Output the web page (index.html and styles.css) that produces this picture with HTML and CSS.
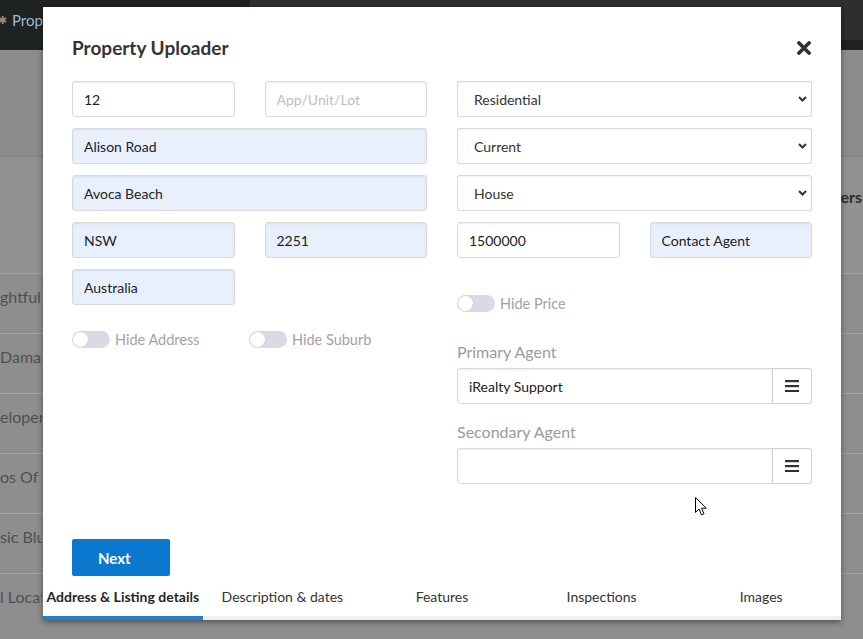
FILE: index.html
```html
<!DOCTYPE html>
<html>
<head>
<meta charset="utf-8">
<title>Property Uploader</title>
<link rel="stylesheet" href="styles.css">
</head>
<body>
<div class="page">
  <header class="nav">
    <div class="brand"><span class="brand-icon">✱</span><span class="brand-text">Properties</span></div>
    <div class="nav-panel"></div>
  </header>
  <section class="hero"></section>
  <div class="table-head"><span class="filters">Filters</span></div>
  <div class="rows">
    <div class="row"><span class="cell">ghtful Apartment</span></div>
    <div class="row"><span class="cell">Damaged Home</span></div>
    <div class="row"><span class="cell">eloper's Dream</span></div>
    <div class="row"><span class="cell">os Of Potential</span></div>
    <div class="row"><span class="cell">sic Blue Cottage</span></div>
    <div class="row"><span class="cell">l Location</span></div>
  </div>
</div>

<div class="modal">
  <div class="modal-header">
    <h1>Property Uploader</h1>
    <button class="close" type="button" aria-label="Close">
      <svg width="14" height="14" viewBox="0 0 14 14"><path d="M2 2L12 12M12 2L2 12" stroke="#333" stroke-width="3.6" stroke-linecap="square"/></svg>
    </button>
  </div>

  <div class="form">
    <div class="col">
      <div class="pair">
        <input class="field" value="12">
        <input class="field" placeholder="App/Unit/Lot">
      </div>
      <input class="field auto" value="Alison Road">
      <input class="field auto" value="Avoca Beach">
      <div class="pair">
        <input class="field auto" value="NSW">
        <input class="field auto" value="2251">
      </div>
      <div class="pair">
        <input class="field auto" value="Australia">
      </div>
      <div class="toggles">
        <label class="toggle"><span class="track"><span class="knob"></span></span>Hide Address</label>
        <label class="toggle"><span class="track"><span class="knob"></span></span>Hide Suburb</label>
      </div>
    </div>

    <div class="col">
      <div class="select"><span>Residential</span><svg width="9" height="6" viewBox="0 0 9 6"><path d="M1 1l3.5 3.5L8 1" fill="none" stroke="#333" stroke-width="2"/></svg></div>
      <div class="select"><span>Current</span><svg width="9" height="6" viewBox="0 0 9 6"><path d="M1 1l3.5 3.5L8 1" fill="none" stroke="#333" stroke-width="2"/></svg></div>
      <div class="select"><span>House</span><svg width="9" height="6" viewBox="0 0 9 6"><path d="M1 1l3.5 3.5L8 1" fill="none" stroke="#333" stroke-width="2"/></svg></div>
      <div class="pair">
        <input class="field" value="1500000">
        <input class="field auto" value="Contact Agent">
      </div>
      <div class="toggles price">
        <label class="toggle"><span class="track"><span class="knob"></span></span>Hide Price</label>
      </div>
      <div class="agent primary">
        <div class="agent-label">Primary Agent</div>
        <div class="group">
          <input class="field" value="iRealty Support">
          <button class="menu" type="button" aria-label="Choose agent">
            <svg width="14" height="12" viewBox="0 0 14 12"><rect y="0" width="14" height="2.2" fill="#333"/><rect y="5" width="14" height="2.2" fill="#333"/><rect y="10" width="14" height="2.2" fill="#333"/></svg>
          </button>
        </div>
      </div>
      <div class="agent secondary">
        <div class="agent-label">Secondary Agent</div>
        <div class="group">
          <input class="field" value="">
          <button class="menu" type="button" aria-label="Choose agent">
            <svg width="14" height="12" viewBox="0 0 14 12"><rect y="0" width="14" height="2.2" fill="#333"/><rect y="5" width="14" height="2.2" fill="#333"/><rect y="10" width="14" height="2.2" fill="#333"/></svg>
          </button>
        </div>
      </div>
    </div>
  </div>

  <div class="footer">
    <button class="next" type="button">Next</button>
  </div>

  <nav class="tabs">
    <div class="tab active">Address &amp; Listing details</div>
    <div class="tab">Description &amp; dates</div>
    <div class="tab">Features</div>
    <div class="tab">Inspections</div>
    <div class="tab">Images</div>
  </nav>
</div>

<svg class="cursor" width="12" height="19" viewBox="0 0 12 19"><path d="M0.5 0.5L0.5 15.5L4 12L6.5 17.8L9 16.7L6.6 11.2L11.2 11.2Z" fill="#fff" stroke="#000" stroke-width="1" stroke-linejoin="round"/></svg>
</body>
</html>
```

FILE: styles.css
```css
* { box-sizing: border-box; }

html, body {
  margin: 0;
  padding: 0;
}

body {
  width: 863px;
  height: 639px;
  overflow: hidden;
  position: relative;
  background: #8e8e8e;
  font-family: "Lato", "Liberation Sans", sans-serif;
}

/* ---------- background page ---------- */
.page {
  width: 863px;
  height: 639px;
  overflow: hidden;
}

.nav {
  display: flex;
  height: 50px;
  background: #1e2222;
}

.brand {
  width: 250px;
  height: 40px;
  display: flex;
  align-items: center;
  gap: 5px;
  color: #9bbbd6;
  font-size: 15px;
}

.brand-icon {
  margin-left: -2px;
  color: #a08a74;
  font-size: 11px;
}

.nav-panel {
  flex: 1;
  height: 40px;
  background: #2e2e2e;
  border-bottom-left-radius: 4px;
}

.hero {
  height: 105px;
  background: #8d8d8d;
}

.table-head {
  height: 118px;
  display: flex;
  justify-content: flex-end;
  align-items: flex-start;
  padding-top: 30px;
  background: #919191;
  border-top: 2px solid #868686;
}

.filters {
  margin-right: 1px;
  font-size: 16px;
  font-weight: 700;
  color: #2e2e2e;
}

.row {
  height: 60px;
  border-top: 1px solid #a2a2a2;
  padding-top: 13px;
  font-size: 16px;
  color: #505050;
  white-space: nowrap;
}

.cell {
  display: block;
  width: 42px;
  overflow: hidden;
}

/* ---------- modal ---------- */
.modal {
  position: absolute;
  left: 43px;
  top: 7px;
  width: 798px;
  height: 613px;
  background: #fff;
  display: flex;
  flex-direction: column;
  box-shadow: 0 2px 6px rgba(0, 0, 0, 0.45);
}

.modal-header {
  display: flex;
  justify-content: space-between;
  align-items: center;
  height: 74px;
  padding: 29px 30px 21px 29px;
}

.modal-header h1 {
  margin: 0;
  font-size: 19px;
  line-height: 24px;
  font-weight: 700;
  color: #333;
}

.close {
  width: 14px;
  height: 14px;
  padding: 0;
  border: 0;
  background: none;
  display: flex;
}

.form {
  flex: 1;
  display: grid;
  grid-template-columns: 355px 355px;
  column-gap: 30px;
  align-items: start;
  padding: 0 29px;
}

.col {
  display: flex;
  flex-direction: column;
  gap: 11px;
}

.pair {
  display: grid;
  grid-template-columns: 1fr 1fr;
  gap: 30px;
}

.field {
  display: block;
  width: 100%;
  height: 36px;
  margin: 0;
  padding: 0 11px;
  border: 1px solid #dadada;
  border-radius: 3px;
  background: #fff;
  box-shadow: inset 0 1px 2px rgba(0, 0, 0, 0.08);
  font-family: inherit;
  font-size: 14px;
  color: #222;
  outline: none;
}

.field.auto {
  background: #e8f0fe;
}

.field::placeholder {
  color: #bdbdbd;
}

.select {
  height: 36px;
  display: flex;
  align-items: center;
  justify-content: space-between;
  padding: 0 4px 0 16px;
  border: 1px solid #dadada;
  border-radius: 2px;
  background: #fff;
  box-shadow: inset 0 1px 2px rgba(0, 0, 0, 0.06);
  font-size: 14px;
  color: #333;
}

.toggles {
  display: grid;
  grid-template-columns: 177px auto;
  height: 17px;
  margin-top: 15px;
}

.toggles.price {
  margin-top: 26px;
}

.toggle {
  display: flex;
  align-items: center;
  gap: 5px;
  height: 17px;
  font-size: 14.5px;
  color: #a2a2a2;
  white-space: nowrap;
}

.track {
  width: 38px;
  height: 17px;
  border-radius: 9px;
  background: #dcd8e6;
  padding: 1px;
  display: flex;
}

.knob {
  width: 15px;
  height: 15px;
  border-radius: 50%;
  background: #fff;
  box-shadow: 0 0 1px rgba(0, 0, 0, 0.2);
}

.agent {
  display: flex;
  flex-direction: column;
  gap: 6px;
}

.agent.primary {
  margin-top: 19px;
}

.agent.secondary {
  margin-top: 7px;
}

.agent-label {
  font-size: 16px;
  line-height: 20px;
  color: #9b9b9b;
}

.group {
  display: flex;
}

.group .field {
  flex: 1;
  border-radius: 3px 0 0 3px;
}

.menu {
  width: 40px;
  height: 36px;
  margin-left: -1px;
  padding: 0;
  border: 1px solid #cfcfcf;
  border-radius: 0 3px 3px 0;
  background: #fff;
  display: flex;
  align-items: center;
  justify-content: center;
}

.footer {
  padding: 0 29px 2px;
}

.next {
  display: block;
  width: 98px;
  height: 37px;
  padding: 0 0 0 26px;
  border: 0;
  border-radius: 2px;
  background: #0b78cf;
  color: #fff;
  font-family: inherit;
  font-size: 15px;
  font-weight: 700;
  text-align: left;
}

.tabs {
  display: grid;
  grid-template-columns: repeat(5, 1fr);
}

.tab {
  height: 42px;
  display: flex;
  align-items: center;
  justify-content: center;
  padding-bottom: 1px;
  border-bottom: 4px solid #efefef;
  font-size: 14px;
  color: #333;
  white-space: nowrap;
}

.tab.active {
  font-weight: 700;
  color: #262626;
  border-bottom-color: #2380cc;
}

.cursor {
  position: absolute;
  left: 695px;
  top: 497px;
}
```
